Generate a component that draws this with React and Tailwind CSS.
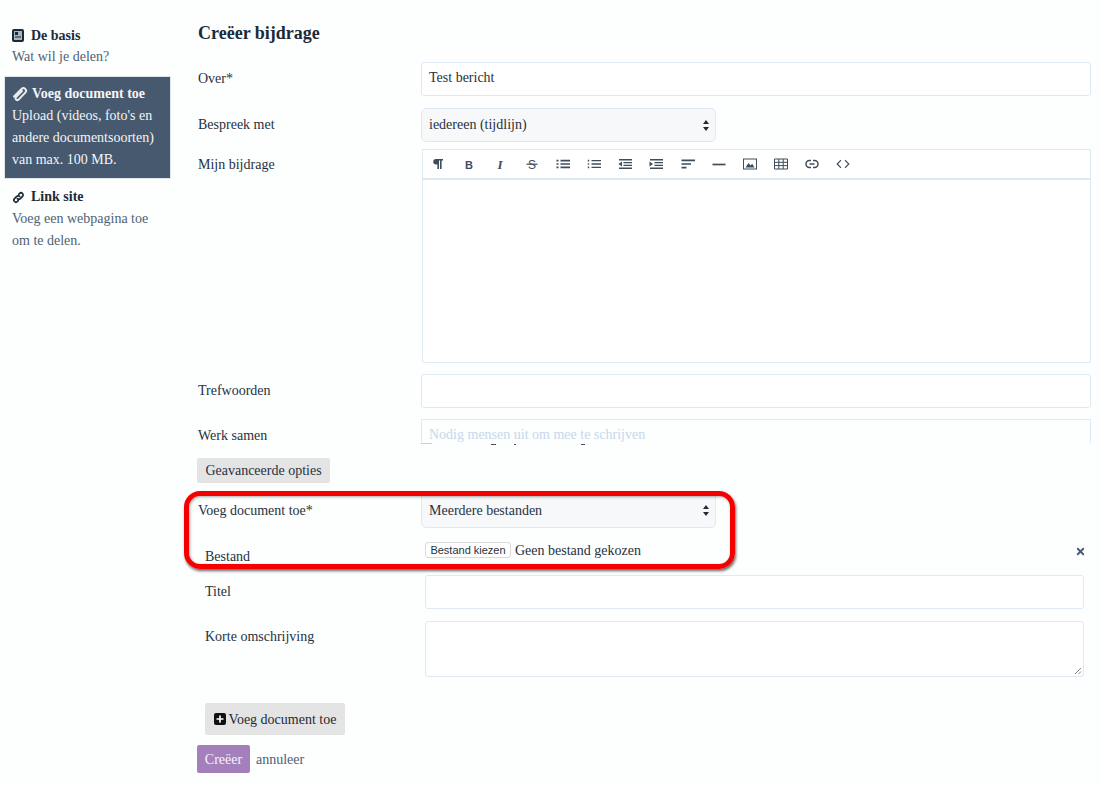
import { Plus, X } from "lucide-react";

const serif = "font-['Liberation_Serif',serif]";

function BookIcon() {
  return (
    <svg width="12" height="13" viewBox="0 0 12 13" className="shrink-0">
      <rect x="0" y="0" width="12" height="13" rx="2" fill="#1b2a38" />
      <rect x="2" y="2" width="8" height="9" fill="#aab4bd" />
      <rect x="3" y="3" width="3" height="3" fill="#1b2a38" />
      <rect x="3" y="7.5" width="6" height="1" fill="#1b2a38" />
    </svg>
  );
}

function ClipIcon() {
  return (
    <svg width="16" height="16" viewBox="0 0 16 16" fill="none" stroke="#e8ecef" strokeWidth="2" strokeLinecap="round" className="shrink-0">
      <path d="M2 10.5 L9.5 3 a2.6 2.6 0 0 1 3.8 3.6 L6.6 13.6 a1.8 1.8 0 0 1 -2.8 -2.2 L10 5" />
    </svg>
  );
}

function LinkIcon() {
  return (
    <svg width="13" height="13" viewBox="0 0 13 13" fill="none" stroke="#1b2a38" strokeWidth="1.7" strokeLinecap="round" className="shrink-0">
      <path d="M5.4 7.6 a2 2 0 0 0 2.9 0 l2.2 -2.2 a2 2 0 0 0 -2.9 -2.9 l-0.8 0.8" />
      <path d="M7.6 5.4 a2 2 0 0 0 -2.9 0 l-2.2 2.2 a2 2 0 0 0 2.9 2.9 l0.8 -0.8" />
    </svg>
  );
}

function Arrows() {
  return (
    <svg width="6" height="11" viewBox="0 0 6 11" fill="#1f2a35" className="shrink-0">
      <path d="M3 0 L6 4 H0 Z" />
      <path d="M3 11 L0 7 H6 Z" />
    </svg>
  );
}

const ink = "#3f4d5b";

// froala style toolbar glyphs
const toolIcons = [
  <path key="p" d="M5 2H12V3.5H10.6V12H9V3.5H8V12H6.4V7.5H5A2.75 2.75 0 0 1 5 2Z" fill={ink} />,
  <text key="b" x="7" y="11.5" textAnchor="middle" fontSize="11" fontWeight="700" fill={ink} fontFamily="Liberation Sans">B</text>,
  <text key="i" x="7" y="11.5" textAnchor="middle" fontSize="13" fontWeight="700" fontStyle="italic" fill={ink} fontFamily="Liberation Serif">I</text>,
  <g key="s"><text x="7" y="11.5" textAnchor="middle" fontSize="12" fill={ink} fontFamily="Liberation Sans">S</text><path d="M1.5 7.2H12.5" stroke={ink} strokeWidth="1.2" /></g>,
  <path key="ul" d="M4.5 3.6H14M4.5 7H14M4.5 10.4H14M0.5 3.6H2.5M0.5 7H2.5M0.5 10.4H2.5" stroke={ink} strokeWidth="1.6" />,
  <path key="ol" d="M4.5 3.6H14M4.5 7H14M4.5 10.4H14M1.5 2.8V4.4M1.5 6.2V7.8M1.5 9.6V11.2" stroke={ink} strokeWidth="1.4" />,
  <g key="out"><path d="M1 2.8H14M5.5 5.6H14M5.5 8.4H14M1 11.2H14" stroke={ink} strokeWidth="1.4" /><path d="M4 4.5V9.5L0.5 7Z" fill={ink} /></g>,
  <g key="in"><path d="M1 2.8H14M5.5 5.6H14M5.5 8.4H14M1 11.2H14" stroke={ink} strokeWidth="1.4" /><path d="M0.5 4.5V9.5L4 7Z" fill={ink} /></g>,
  <path key="al" d="M0.5 3.4H14M0.5 7H10M0.5 10.6H5.5" stroke={ink} strokeWidth="1.6" />,
  <path key="hr" d="M0.5 7.5H13.5" stroke={ink} strokeWidth="1.7" />,
  <g key="img"><rect x="0.5" y="2" width="13" height="10" fill="none" stroke={ink} /><path d="M2.5 10.5L5.5 6 7.5 8.5 9.2 6.8 11.5 10.5Z" fill={ink} /></g>,
  <path key="tb" d="M0.5 2H13.5V12H0.5ZM0.5 5.3H13.5M0.5 8.6H13.5M4.8 2V12M9.2 2V12" fill="none" stroke={ink} strokeWidth="1" />,
  <g key="ln" fill="none" stroke={ink} strokeWidth="1.5"><path d="M6 3.6H4.4a3.4 3.4 0 0 0 0 6.8H6" /><path d="M8 3.6H9.6a3.4 3.4 0 0 1 0 6.8H8" /><path d="M4.5 7H9.5" /></g>,
  <path key="cd" d="M5 3.2L1.2 7 5 10.8M9 3.2L12.8 7 9 10.8" fill="none" stroke={ink} strokeWidth="1.2" />,
];

function Toolbar() {
  return (
    <div className="flex h-[31px] items-center gap-[17.2px] border border-b-2 border-[#dfe9f2] bg-white pl-[8px]">
      {toolIcons.map((icon, i) => (
        <svg key={i} width="14" height="14" viewBox="0 0 14 14" className="shrink-0">
          {icon}
        </svg>
      ))}
    </div>
  );
}

function Row({ label, className = "", labelClass = "pt-[7px]", children }) {
  return (
    <div className={`flex ${className}`}>
      <div className={`w-[224px] shrink-0 pl-px text-[14px] leading-[20px] text-[#27323d] ${labelClass}`}>{label}</div>
      <div className="min-w-0 flex-1">{children}</div>
    </div>
  );
}

const field = "block w-full rounded-[3px] border border-[#dfe9f5] bg-white";

export default function App() {
  return (
    <div className={`${serif} relative flex h-[786px] w-[1100px] overflow-hidden bg-[#fdfefe]`}>
      <aside className="flex w-[171px] shrink-0 flex-col pt-[25px] text-[14px] leading-[22px]">
        <div className="px-[12px] pb-[8px] text-[#4f6174]">
          <div className="flex h-[21px] items-center gap-[7px] font-bold text-[#1b2a38]">
            <BookIcon />
            De basis
          </div>
          <div>Wat wil je delen?</div>
        </div>
        <div className="ml-[4px] border border-[#dfe6ec] bg-[#47596f] px-[7px] pt-[6px] pb-[7px] text-[#f3f5f7]">
          <div className="flex items-center gap-[4px] font-bold">
            <ClipIcon />
            Voeg document toe
          </div>
          <div>Upload (videos, foto's en</div>
          <div>andere documentsoorten)</div>
          <div>van max. 100 MB.</div>
        </div>
        <div className="px-[12px] pt-[7px] text-[#4f6174]">
          <div className="flex items-center gap-[6px] font-bold text-[#1b2a38]">
            <LinkIcon />
            Link site
          </div>
          <div>Voeg een webpagina toe</div>
          <div>om te delen.</div>
        </div>
      </aside>

      <main className="w-[920px] shrink-0 pl-[26px] pt-[22px]">
        <h1 className="mb-[18px] pl-px text-[18px] leading-[22px] font-bold text-[#1b2a38]">Creëer bijdrage</h1>

        <Row label="Over*">
          <div className={`${field} h-[34px] px-[7px] text-[14px] leading-[30px] text-[#27323d]`}>Test bericht</div>
        </Row>

        <Row label="Bespreek met" className="mt-[12px]">
          <div className="flex h-[34px] w-[295px] items-center justify-between rounded-[5px] border border-[#dfe9f5] bg-[#f7f8f9] pr-[6px] pl-[7px] text-[14px] text-[#27323d]">
            <span className="mb-[2px]">iedereen (tijdlijn)</span>
            <Arrows />
          </div>
        </Row>

        <Row label="Mijn bijdrage" className="mt-[7px]" labelClass="pt-[6px]">
          <div className="pl-px">
            <Toolbar />
            <div className="h-[183px] rounded-b-[3px] border border-t-0 border-[#dfe9f5] bg-white" />
          </div>
        </Row>

        <Row label="Trefwoorden" className="mt-[11px]">
          <div className={`${field} h-[34px]`} />
        </Row>

        <Row label="Werk samen" className="mt-[11px]">
          <div className="h-[24px] overflow-hidden border-t border-l border-r border-[#dfe9f5] px-[7px] text-[14px] leading-[30px] text-[#c6d8ec]">
            Nodig mensen uit om mee te schrijven
          </div>
          {/* clipped edge of the field and the cut off descenders below the placeholder */}
          <svg width="170" height="3" viewBox="0 0 170 3" className="block">
            <path d="M0 0.5H11" stroke="#c9cfd5" />
            <path d="M70 1.5H75M93 1.5H95M160 1.5H164" stroke="#4a4f55" strokeWidth="1.2" />
          </svg>
        </Row>

        <button className="mt-[12px] block h-[25px] w-[133px] rounded-[2px] bg-[#e4e4e4] text-[14px] leading-[24px] text-[#27323d]">
          Geavanceerde opties
        </button>

        <Row label="Voeg document toe*" className="mt-[9px]" labelClass="pt-[9px]">
          <div className="flex h-[36px] w-[295px] items-center justify-between rounded-[5px] border border-[#dfe9f5] bg-[#f7f8f9] pr-[6px] pl-[7px] text-[14px] text-[#27323d]">
            <span>Meerdere bestanden</span>
            <Arrows />
          </div>
        </Row>

        <div className="pl-[8px]">
          <div className="relative mt-[13px] flex h-[26px]">
            <div className="w-[220px] shrink-0 pt-[6px] text-[14px] leading-[20px] text-[#27323d]">Bestand</div>
            <div className="flex h-[18px] items-center gap-[4px] text-[14px] text-[#27323d]">
              <span className="w-[86px] rounded-[3px] border border-[#d9d9d9] bg-white text-center font-['Liberation_Sans',sans-serif] text-[11px] leading-[14px]">
                Bestand kiezen
              </span>
              Geen bestand gekozen
            </div>
            <X size={11} strokeWidth={4} className="absolute top-[5px] right-[5px] text-[#47596f]" />
          </div>

          <div className="mr-[7px]">
            <div className="mt-[8px] flex">
              <div className="w-[220px] shrink-0 pt-[7px] text-[14px] leading-[20px] text-[#27323d]">Titel</div>
              <div className={`${field} h-[34px]`} />
            </div>
            <div className="mt-[12px] flex">
              <div className="w-[220px] shrink-0 pt-[6px] text-[14px] leading-[20px] text-[#27323d]">Korte omschrijving</div>
              <div className={`${field} relative h-[56px]`}>
                <svg width="8" height="8" viewBox="0 0 8 8" className="absolute right-[1px] bottom-[1px]" stroke="#8a8a8a" fill="none">
                  <path d="M1 7L7 1M4.5 7L7 4.5" />
                </svg>
              </div>
            </div>
          </div>

          <button className="mt-[26px] flex h-[32px] w-[140px] items-center justify-center gap-[3px] rounded-[2px] bg-[#e4e4e4] text-[14px] text-[#1f2a35]">
            <span className="flex h-[12px] w-[12px] items-center justify-center rounded-[2px] bg-[#111]">
              <Plus size={10} strokeWidth={4} color="#fff" />
            </span>
            Voeg document toe
          </button>
        </div>

        <div className="mt-[10px] flex items-center gap-[6px]">
          <button className="h-[28px] w-[53px] rounded-[2px] bg-[#a380bc] text-[14px] text-[#f6f1f9]">Creëer</button>
          <a className="text-[14px] text-[#4f6174]">annuleer</a>
        </div>
      </main>

      {/* red annotation from the screenshot */}
      <div className="absolute top-[491px] left-[184px] h-[78px] w-[551px] rounded-[16px] border-[5px] border-[#f50000] shadow-[1px_2px_3px_rgba(0,0,0,0.6),inset_1px_1px_3px_rgba(0,0,0,0.35)]" />
    </div>
  );
}
